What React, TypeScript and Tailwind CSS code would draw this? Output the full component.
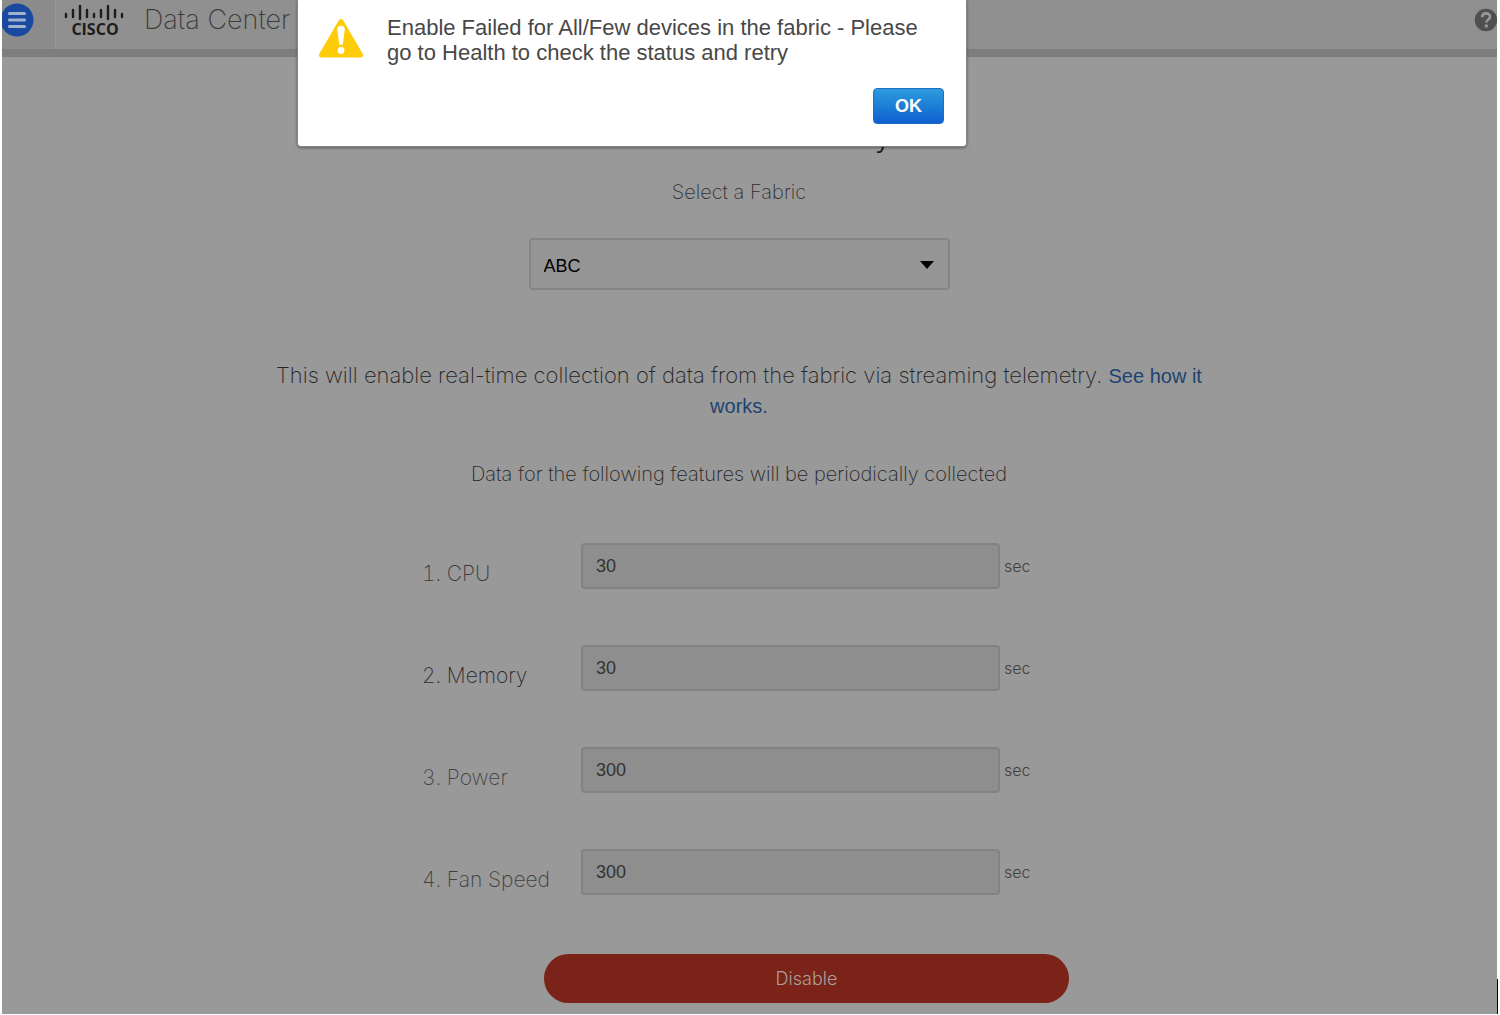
import { useState } from "react";

const features = [
  { id: "cpu", label: "1. CPU", value: "30", tone: "text-[#3a3a3a]" },
  { id: "memory", label: "2. Memory", value: "30", tone: "text-[#2b2b2b]" },
  { id: "power", label: "3. Power", value: "300", tone: "text-[#444444]" },
  { id: "fan", label: "4. Fan Speed", value: "300", tone: "text-[#404040]" },
];

// Bars of the logo: x, top, bottom
const logoBars = [
  [2, 10, 13],
  [9, 6, 13],
  [16, 2, 15],
  [23, 6, 13],
  [30, 10, 13],
  [37, 6, 13],
  [44, 2, 15],
  [51, 6, 13],
  [58, 10, 13],
];

function CiscoLogo() {
  return (
    <div className="flex flex-col items-center text-[#1c1c1c]">
      <svg width="62" height="17" viewBox="0 0 62 17" className="shrink-0">
        {logoBars.map(([x, top, bottom]) => (
          <line
            key={x}
            x1={x}
            x2={x}
            y1={top}
            y2={bottom}
            stroke="currentColor"
            strokeWidth="2.4"
            strokeLinecap="round"
          />
        ))}
      </svg>
      <span className="font-['Open_Sans',sans-serif] text-[16px] leading-4 font-bold">CISCO</span>
    </div>
  );
}

function Header() {
  return (
    <header className="flex h-[57px] overflow-hidden border-b-8 border-[#7e7e7e] bg-[#909090]">
      <div className="w-[54px] shrink-0 border-r border-[#989898] bg-[#8c8c8c]">
        <button aria-label="Menu" className="-ml-0.5 mt-[3px] block">
          <svg width="34" height="34" viewBox="0 0 34 34">
            <circle cx="17" cy="17" r="16.5" fill="#1b49a0" />
            <path d="M9.5 10.5h15M9.5 17h15M9.5 23.5h15" stroke="#a3b3cf" strokeWidth="3" strokeLinecap="round" />
          </svg>
        </button>
      </div>
      <div className="flex flex-1 items-start pl-2 pt-1">
        <CiscoLogo />
        <span className="ml-[18px] text-[27px] leading-8 font-extralight text-[#3c3c3c]">Data Center</span>
      </div>
      <button aria-label="Help" className="-mr-px mt-2 block h-6 w-6">
        <svg width="24" height="24" viewBox="0 0 24 24">
          <circle cx="12" cy="12" r="11.2" fill="#505050" />
          <path d="M8.2 9.2c0-5 7.8-5 7.8-.4 0 3-3.6 2.8-3.6 5.6" fill="none" stroke="#999" strokeWidth="2.6" />
          <circle cx="12.3" cy="18" r="1.7" fill="#999" />
        </svg>
      </button>
    </header>
  );
}

function AlertDialog({ onClose }: { onClose: () => void }) {
  return (
    <div
      role="alertdialog"
      aria-labelledby="alert-text"
      className="absolute top-0 left-[297px] z-10 w-[670px] rounded-b-[4px] border border-t-0 border-[#858585] bg-white pr-[22px] pb-[22px] pl-5 shadow-[0_1px_3px_rgba(0,0,0,0.4)]"
    >
      <div className="flex pt-[15px]">
        <svg width="46" height="42" viewBox="0 0 46 42" className="mt-0.5 shrink-0">
          <path d="M23 4.5 42.5 38H3.5Z" fill="#ffcc0a" stroke="#ffcc0a" strokeWidth="5" strokeLinejoin="round" />
          <path d="M19.2 12.5a3.8 3.8 0 0 1 7.6 0L25 26a2 2 0 0 1-4 0Z" fill="#fff" />
          <circle cx="23" cy="33.5" r="3.4" fill="#fff" />
        </svg>
        <p
          id="alert-text"
          className="ml-[23px] font-['Liberation_Sans',sans-serif] text-[22px] leading-[25px] text-[#484848]"
        >
          Enable Failed for All/Few devices in the fabric - Please go to Health to check the status and retry
        </p>
      </div>
      <div className="mt-[23px] flex justify-end">
        <button
          onClick={onClose}
          className="h-9 w-[71px] rounded-[4px] border border-[#1a6fc4] bg-linear-to-b from-[#2f9bdc] to-[#125fd0] font-['Liberation_Sans',sans-serif] text-[18px] leading-none font-bold text-white"
        >
          OK
        </button>
      </div>
    </div>
  );
}

export default function App() {
  const [alertOpen, setAlertOpen] = useState(true);

  return (
    <div className="relative flex min-h-screen flex-col bg-white pr-[3px] pb-px pl-0.5 font-['Inter',sans-serif]">
      {alertOpen && <AlertDialog onClose={() => setAlertOpen(false)} />}
      <Header />

      <main className="flex flex-1 flex-col items-center bg-[#999999] pr-[21px] pb-[11px]">
        <h1 className="mt-[61px] pl-[288px] text-[30px] leading-9 font-light text-[#1c1c1c]">y</h1>

        <label htmlFor="fabric" className="mt-[23px] text-[20px] leading-[30px] font-extralight text-[#303030]">
          Select a Fabric
        </label>
        <div className="relative mt-[31px] w-[421px]">
          <select
            id="fabric"
            className="h-[52px] w-full appearance-none rounded-[4px] border-2 border-[#858585] bg-[#959595] px-[13px] pt-1 font-['Liberation_Sans',sans-serif] text-[18px] text-black"
          >
            <option>ABC</option>
          </select>
          <svg width="14" height="8" viewBox="0 0 14 8" className="pointer-events-none absolute top-[23px] right-4">
            <path d="M0 0h14L7 8Z" fill="#000" />
          </svg>
        </div>

        <p className="mt-[71px] w-[930px] text-center text-[22px] leading-[29px] font-extralight text-[#262626]">
          This will enable real-time collection of data from the fabric via streaming telemetry.{" "}
          <a href="#how" className="font-['Liberation_Sans',sans-serif] text-[20px] font-normal text-[#1d4470]">
            See how it works.
          </a>
        </p>
        <p className="mt-[39px] text-[20px] leading-[29px] font-extralight text-[#262626]">
          Data for the following features will be periodically collected
        </p>

        <div className="mt-[54px] flex w-[634px] flex-col gap-14">
          {features.map((f) => (
            <div key={f.id} className="flex h-[46px] items-center">
              <label
                htmlFor={f.id}
                className={`w-[159px] shrink-0 pt-4 text-[21px] leading-[30px] font-extralight tabular-nums ${f.tone}`}
              >
                {f.label}
              </label>
              <input
                id={f.id}
                defaultValue={f.value}
                className="h-full w-[419px] rounded-[4px] border-2 border-[#838383] bg-[#8e8e8e] px-[13px] font-['Liberation_Sans',sans-serif] text-[18px] text-[#333333]"
              />
              <span className="ml-1 text-[16px] leading-6 font-light text-[#404040]">sec</span>
            </div>
          ))}
        </div>

        <button className="mt-[59px] ml-[135px] h-[49px] w-[525px] rounded-full bg-[#7b2318] text-[18px] font-light text-[#a9a09e]">
          Disable
        </button>
      </main>

      <div className="absolute right-0.5 bottom-px h-[35px] w-px bg-black" />
    </div>
  );
}
